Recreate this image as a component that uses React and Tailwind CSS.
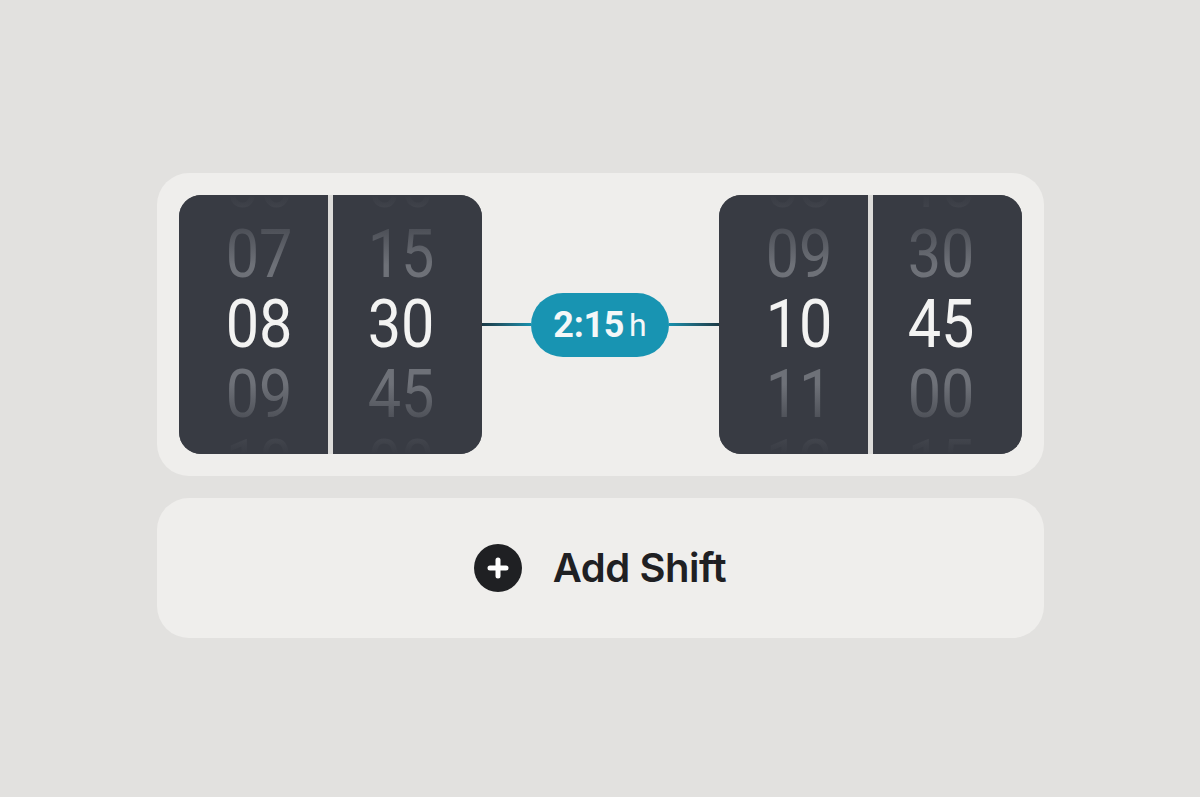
const pickers = {
  start: [
    ['06', '07', '08', '09', '10'],
    ['00', '15', '30', '45', '00'],
  ],
  end: [
    ['08', '09', '10', '11', '12'],
    ['15', '30', '45', '00', '15'],
  ],
};

function Wheel({ values, side }) {
  return (
    <div
      className={`relative flex-1 bg-[#383b43] overflow-hidden flex flex-col items-center justify-center ${
        side === 'left' ? 'pl-3' : 'pr-3'
      }`}
    >
      {values.map((v, i) => (
        <div
          key={i}
          className={`h-[70px] shrink-0 leading-[70px] text-[66px] scale-x-[0.9] ${
            i === 2 ? 'text-[#f3f3f2]' : 'text-[#6e7178]'
          }`}
        >
          {v}
        </div>
      ))}
      <div className="pointer-events-none absolute inset-x-0 top-0 h-[70px] bg-gradient-to-b from-[#383b43] via-[#383b43]/60 to-transparent" />
      <div className="pointer-events-none absolute inset-x-0 bottom-0 h-[70px] bg-gradient-to-t from-[#383b43] via-[#383b43]/60 to-transparent" />
    </div>
  );
}

function Picker({ cols }) {
  return (
    <div className="w-[303px] h-[259px] shrink-0 rounded-[22px] overflow-hidden flex gap-[5px] bg-[#dcdbd9]">
      <Wheel values={cols[0]} side="left" />
      <Wheel values={cols[1]} side="right" />
    </div>
  );
}

export default function App() {
  return (
    <div
      className="min-h-[797px] w-full bg-[#e2e1df] pt-[173px] flex flex-col items-center gap-[22px]"
      style={{ fontFamily: 'Roboto, "Liberation Sans", sans-serif' }}
    >
      <div className="w-[887px] h-[303px] rounded-[32px] bg-[#efeeec] p-[22px] flex items-center">
        <Picker cols={pickers.start} />
        <div className="flex-1 h-[3px] bg-gradient-to-r from-[#1c3a46] to-[#1590ad]" />
        <div className="w-[138px] h-[64px] shrink-0 rounded-full bg-[#1894b2] flex items-center justify-center gap-[5px] text-[#f4f7f8]">
          <span className="text-[36px] font-bold leading-none tracking-[-0.01em]">2:15</span>
          <span className="text-[32px] font-normal leading-none">h</span>
        </div>
        <div className="flex-1 h-[3px] bg-gradient-to-r from-[#1590ad] to-[#1c3a46]" />
        <Picker cols={pickers.end} />
      </div>

      <button className="w-[887px] h-[140px] rounded-[32px] bg-[#efeeec] flex items-center justify-center gap-[31px]">
        <span className="w-[48px] h-[48px] rounded-full bg-[#1f2023] flex items-center justify-center">
          <svg width="22" height="22" viewBox="0 0 22 22">
            <path d="M11 3v16M3 11h16" stroke="#fff" strokeWidth="5" strokeLinecap="round" />
          </svg>
        </span>
        <span
          className="text-[40px] font-semibold text-[#1f2023] leading-none tracking-[-0.012em]"
          style={{ fontFamily: 'Inter, "Liberation Sans", sans-serif' }}
        >
          Add Shift
        </span>
      </button>
    </div>
  );
}
